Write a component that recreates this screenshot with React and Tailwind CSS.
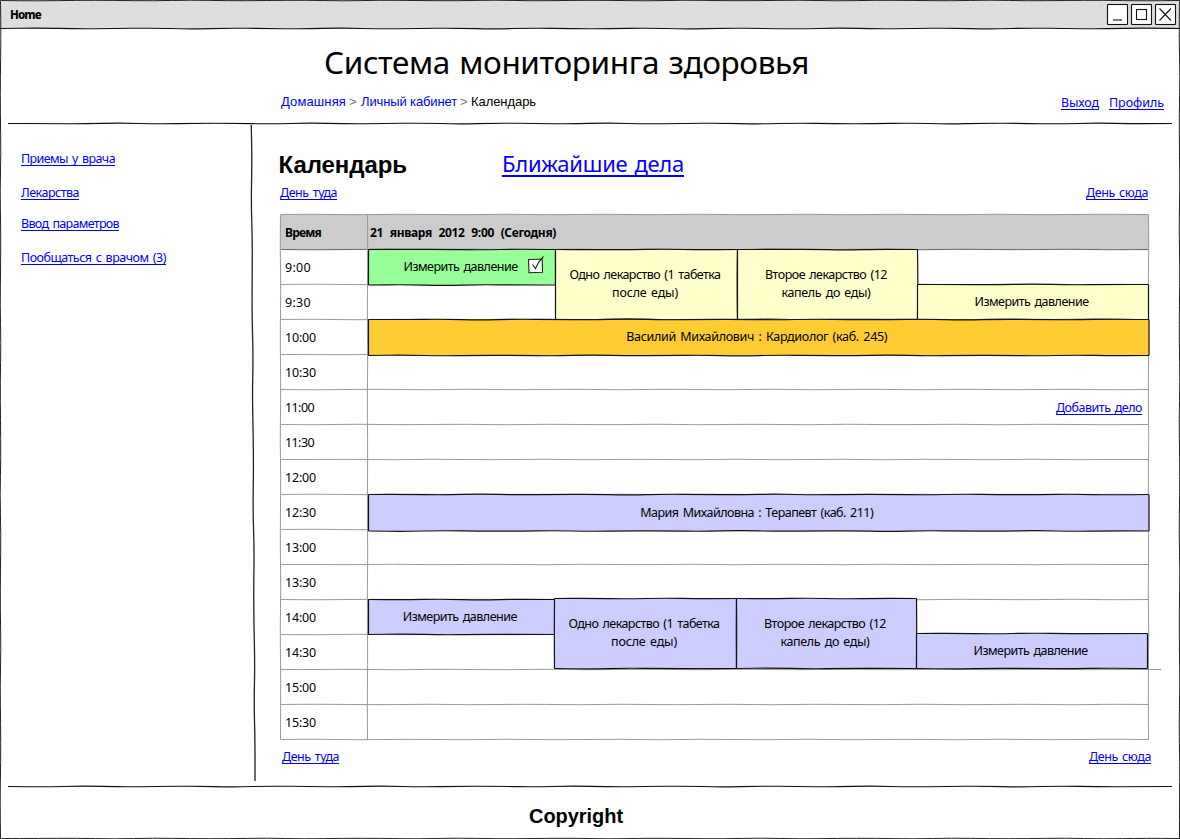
import { useLayoutEffect, useRef } from "react";

const HAND = 'font-["Noto_Sans",sans-serif]';
const ARIAL = 'font-["Liberation_Sans",Arial,sans-serif]';

/* A single line of text whose tracking is adjusted to fill a given width. */
function Fit({ w, className = "", children }) {
  const ref = useRef(null);
  useLayoutEffect(() => {
    const el = ref.current;
    el.style.letterSpacing = "0px";
    const natural = el.getBoundingClientRect().width;
    el.style.letterSpacing = `${(w - natural) / el.textContent.length}px`;
  }, [w, children]);
  return (
    <span ref={ref} className={`inline-block whitespace-nowrap ${className}`}>
      {children}
    </span>
  );
}

function Link({ w, className = "text-[12.5px] leading-[18px]", children }) {
  return (
    <a className={`block text-[#0000ff] ${className}`}>
      <Fit w={w} className="underline decoration-1 underline-offset-[2px] [text-decoration-skip-ink:none]">{children}</Fit>
    </a>
  );
}

/* Slightly unsteady pen stroke between two points. */
function stroke(x1, y1, x2, y2, seed, amp = 0.5) {
  const len = Math.hypot(x2 - x1, y2 - y1);
  const n = Math.max(1, Math.round(len / 38));
  const nx = -(y2 - y1) / len;
  const ny = (x2 - x1) / len;
  let d = `M${x1} ${y1}`;
  let px = x1;
  let py = y1;
  for (let i = 1; i <= n; i++) {
    const off = i === n ? 0 : Math.sin(seed * 7.3 + i * 2.4) * amp;
    const x = x1 + ((x2 - x1) * i) / n + nx * off;
    const y = y1 + ((y2 - y1) * i) / n + ny * off;
    if (i === n) d += ` Q${px} ${py} ${x} ${y}`;
    else d += ` Q${px} ${py} ${(px + x) / 2} ${(py + y) / 2}`;
    px = x;
    py = y;
  }
  return d;
}

function Frame({ w, h, seed = 1, color = "#111", width = 1, fill = "none" }) {
  return (
    <svg className="pointer-events-none absolute inset-0 overflow-visible" width={w} height={h} fill="none" stroke={color} strokeWidth={width}>
      <rect x="0.5" y="0.5" width={w} height={h} fill={fill} stroke="none" />
      <path d={stroke(0.5, 0.5, w + 0.5, 0.5, seed)} />
      <path d={stroke(w + 0.5, 0.5, w + 0.5, h + 0.5, seed + 1)} />
      <path d={stroke(0.5, h + 0.5, w + 0.5, h + 0.5, seed + 2)} />
      <path d={stroke(0.5, 0.5, 0.5, h + 0.5, seed + 3)} />
    </svg>
  );
}

function Rule({ w, seed }) {
  return (
    <svg className="block h-px shrink-0 overflow-visible" width={w} height="1" fill="none" stroke="#111" strokeWidth="1.1">
      <path d={stroke(0, 0.5, w, 0.5, seed, 0.6)} />
    </svg>
  );
}

function WindowButton({ seed, children }) {
  return (
    <span className="relative block h-5 w-5">
      <Frame w={20} h={20} seed={seed} fill="#fff" width={1.1} />
      <svg className="relative block" width="21" height="21" fill="none" stroke="#111" strokeWidth="1.1">
        {children}
      </svg>
    </span>
  );
}

const TIMES = ["9:00", "9:30", "10:00", "10:30", "11:00", "11:30", "12:00", "12:30", "13:00", "13:30", "14:00", "14:30", "15:00", "15:30"];
const TIME_W = [26, 26, 31, 31, 29, 29, 31, 31, 31, 31, 31, 31, 31, 31];

const GREEN = "#99ff99";
const YELLOW = "#ffffcc";
const ORANGE = "#ffcc33";
const VIOLET = "#ccccff";

const EVENTS = [
  { x: 88, y: 35, w: 187, h: 35.5, fill: GREEN, lines: [["Измерить давление", 114]], done: true },
  { x: 275, y: 34.5, w: 182, h: 70, fill: YELLOW, lines: [["Одно лекарство (1 табетка", 151], ["после еды)", 66]] },
  { x: 457, y: 34.5, w: 180, h: 70, fill: YELLOW, lines: [["Второе лекарство (12", 122], ["капель до еды)", 89]] },
  { x: 637, y: 69.5, w: 231, h: 35, fill: YELLOW, lines: [["Измерить давление", 114]] },
  { x: 87.5, y: 104.5, w: 780.5, h: 36, fill: ORANGE, lines: [["Василий Михайлович : Кардиолог (каб. 245)", 261]] },
  { x: 87.5, y: 280, w: 780.5, h: 36.5, fill: VIOLET, lines: [["Мария Михайловна : Терапевт (каб. 211)", 233]] },
  { x: 87.5, y: 384.5, w: 186.5, h: 35, fill: VIOLET, lines: [["Измерить давление", 114]] },
  { x: 274, y: 383.5, w: 182, h: 70, fill: VIOLET, lines: [["Одно лекарство (1 табетка", 151], ["после еды)", 66]] },
  { x: 456, y: 383.5, w: 180, h: 70, fill: VIOLET, lines: [["Второе лекарство (12", 122], ["капель до еды)", 89]] },
  { x: 636, y: 418.5, w: 231, h: 35, fill: VIOLET, lines: [["Измерить давление", 114]] },
];

function Event({ e, seed }) {
  return (
    <div className="absolute" style={{ left: e.x, top: e.y, width: e.w, height: e.h }}>
      <Frame w={e.w} h={e.h} seed={seed} fill={e.fill} width={1.2} />
      <div className="relative flex h-full flex-col items-center justify-center pt-px pr-[2px] text-[12.5px] leading-[18px]">
        {e.lines.map(([text, w]) => (
          <Fit key={text} w={w}>{text}</Fit>
        ))}
      </div>
      {e.done && (
        <svg className="absolute top-[5px] right-[9px]" width="20" height="22" fill="none" stroke="#222" strokeWidth="1.1">
          <path d="M2.500 5.500L16.200 5L16.500 18.300L3 18.700Z" fill="#fff" />
          <path d="M6.500 10.500L9.500 14.500Q12 8 17.500 2.500" />
        </svg>
      )}
    </div>
  );
}

function GridLines() {
  return (
    <svg className="pointer-events-none absolute inset-0 overflow-visible" width="868" height="525" fill="none" stroke="#999" strokeWidth="1">
      <rect x="0.500" y="0.500" width="868" height="35" fill="#ccc" stroke="none" />
      {TIMES.map((t, i) => (
        <path key={t} d={stroke(0.5, 70.5 + i * 35, i === 11 ? 881 : 868.5, 70.5 + i * 35, i + 2, 0.4)} />
      ))}
      <path d={stroke(0.5, 0.5, 868.5, 0.5, 3, 0.4)} />
      <path stroke="#666" d={stroke(0.5, 35.5, 868.5, 35.5, 5, 0.4)} />
      <path d={stroke(0.5, 0.5, 0.5, 525.5, 6, 0.4)} />
      <path d={stroke(87.5, 0.5, 87.5, 525.5, 8, 0.3)} />
      <path d={stroke(868.5, 0.5, 868.5, 525.5, 9, 0.4)} />
    </svg>
  );
}

function Calendar() {
  return (
    <div className="relative h-[526px] w-[869px]">
      <GridLines />
      <div className="relative flex h-[35px] items-center pt-[2px] text-[12px] leading-[18px] font-bold [word-spacing:4px]">
        <span className="w-[90px] pl-[5px]"><Fit w={36}>Время</Fit></span>
        <Fit w={186}>21 января 2012 9:00 (Сегодня)</Fit>
      </div>
      {TIMES.map((t, i) => (
        <div key={t} className="relative flex h-[35px] items-center justify-between pt-[2px] pr-[7px] pl-[5px] text-[12.5px] leading-[18px]">
          <Fit w={TIME_W[i]}>{t}</Fit>
          {t === "11:00" && <Link w={86}>Добавить дело</Link>}
        </div>
      ))}
      {EVENTS.map((e, i) => (
        <Event key={i} e={e} seed={i * 3 + 1} />
      ))}
    </div>
  );
}

export default function App() {
  return (
    <div className={`relative flex h-[839px] w-[1180px] flex-col overflow-hidden bg-white text-black [word-spacing:1.5px] ${HAND}`}>
      <div className="flex h-7 shrink-0 items-center justify-between bg-[#dedede] pr-[5px] pl-[10px]">
        <Fit w={31} className="pt-px text-[11.5px] font-extrabold">Home</Fit>
        <div className="flex gap-1">
          <WindowButton seed={1}><path d="M6 16H15" /></WindowButton>
          <WindowButton seed={2}><rect x="5.500" y="5.500" width="10" height="10" /></WindowButton>
          <WindowButton seed={3}><path d="M4.500 4.500L16 16.500M16 4.500L4.500 16.500" /></WindowButton>
        </div>
      </div>
      <Rule w={1180} seed={2} />

      <header className="flex h-[94px] shrink-0 flex-col">
        <h1 className="flex h-[64px] items-center pt-[2px] pl-[324px] text-[31.5px] leading-[40px]">
          <Fit w={485}>Система мониторинга здоровья</Fit>
        </h1>
        <div className="flex justify-between pr-4 pl-[281px]">
          <nav className={`flex h-[18px] text-[13px] leading-[18px] [word-spacing:0px] ${ARIAL}`}>
            <a className="w-[68px] text-[#0000ff]"><Fit w={65}>Домашняя</Fit></a>
            <span className="w-[12px] text-[#777]">&gt;</span>
            <a className="w-[99px] text-[#0000ff]"><Fit w={96}>Личный кабинет</Fit></a>
            <span className="w-[11px] text-[#777]">&gt;</span>
            <Fit w={65}>Календарь</Fit>
          </nav>
          <nav className="flex gap-[10px] pt-px">
            <Link w={38}>Выход</Link>
            <Link w={55}>Профиль</Link>
          </nav>
        </div>
      </header>
      <div className="pl-2"><Rule w={1164} seed={4} /></div>

      <div className="flex h-[662px] shrink-0">
        <aside className="flex w-[251px] flex-col pt-[26px] pl-[21px]">
          <Link w={94}>Приемы у врача</Link>
          <Link w={58} className="mt-4 text-[12.5px] leading-[18px]">Лекарства</Link>
          <Link w={98} className="mt-[13px] text-[12.5px] leading-[18px]">Ввод параметров</Link>
          <Link w={145} className="mt-4 text-[12.5px] leading-[18px]">Пообщаться с врачом (3)</Link>
        </aside>
        <svg className="mt-px h-[656px] w-1 shrink-0 overflow-visible" fill="none" stroke="#222" strokeWidth="1.3">
          <path d={stroke(0.3, 0, 4, 656, 3, 0.6)} />
        </svg>
        <main className="flex w-[925px] flex-col pl-[25px]">
          <div className="flex h-[60px] items-center pt-[22px]">
            <h2 className={`-ml-[1.5px] w-[223.5px] text-[24px] leading-[30px] font-bold ${ARIAL}`}>
              <Fit w={128.5}>Календарь</Fit>
            </h2>
            <a className="block pb-[4px] text-[22px] leading-[30px] text-[#0000ff]">
              <Fit w={182} className="underline decoration-2 underline-offset-[3px] [text-decoration-skip-ink:none]">Ближайшие дела</Fit>
            </a>
          </div>
          <div className="flex w-[868px] justify-between">
            <Link w={57}>День туда</Link>
            <Link w={62}>День сюда</Link>
          </div>
          <div className="mt-[12px]"><Calendar /></div>
          <div className="mt-2 flex w-[871px] justify-between pl-[2px]">
            <Link w={57}>День туда</Link>
            <Link w={62}>День сюда</Link>
          </div>
        </main>
      </div>

      <div className="pl-2"><Rule w={1164} seed={6} /></div>
      <footer className={`flex flex-1 items-center pt-[6px] pl-[529px] text-[20px] font-bold ${ARIAL}`}>
        <Fit w={94}>Copyright</Fit>
      </footer>

      <Frame w={1179} h={838} seed={5} width={1} color="#222" />
    </div>
  );
}
